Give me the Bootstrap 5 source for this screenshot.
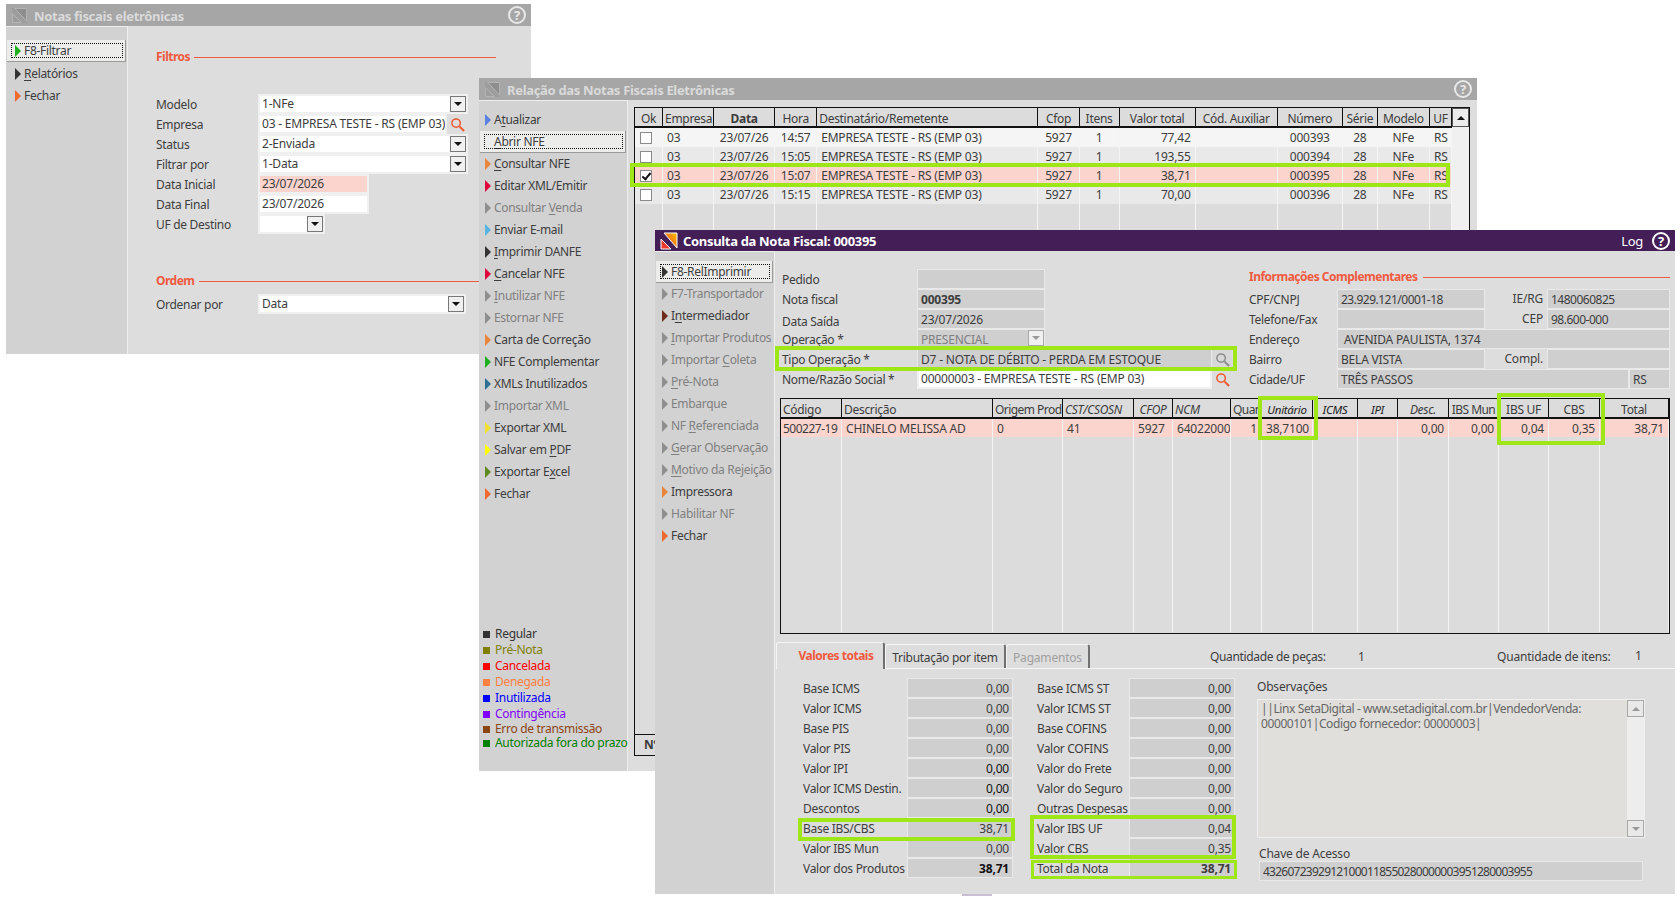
<!DOCTYPE html>
<html lang="pt-BR">

<head>
  <meta charset="UTF-8">
  <meta name="viewport" content="width=device-width, initial-scale=1.0">
  <title>Notas fiscais eletrônicas</title>
  <link href="https://cdn.jsdelivr.net/npm/bootstrap@5.3.2/dist/css/bootstrap.min.css" rel="stylesheet">
  <style>
    body {
      font-family: "Noto Sans", sans-serif;
      font-size: 12px;
      line-height: 18px;
      letter-spacing: -0.2px;
      color: #3d3d3d;
      background-color: white;
      overflow: hidden;
    }

    .stage { width: 1680px; height: 906px; }

    /* the three windows lie on a free canvas */
    .app-win { position: absolute; background: #dddddd; display: flex; flex-direction: column; overflow: hidden; }
    #winFiltro { left: 6px; top: 4px; width: 525px; height: 350px; z-index: 1; }
    #winRelacao { left: 479px; top: 78px; width: 998px; height: 693px; z-index: 2; }
    #winConsulta { left: 655px; top: 230px; width: 1020px; height: 664px; z-index: 3; }
    .win-body { min-height: 0; overflow: hidden; }

    .title-bar {
      height: 22px; flex: none; background: #a6a6a6; color: #dadada; gap: 6px;
      font-size: 13px; font-weight: 700; padding: 0 5px; letter-spacing: -0.32px;
    }
    .title-bar.on { background: #431e57; color: white; height: 21px; gap: 5px; }
    .win-name { padding-top: 2px; }
    .on .win-name { padding-top: 0; }
    .help-ico {
      width: 18px; height: 18px; border: 2px solid #e8e8e8; color: #e8e8e8; border-radius: 50%;
      font-size: 13px; line-height: 14px; text-align: center; font-weight: 700;
    }
    .on .help-ico { border-color: white; color: white; }

    .side-bar {
      flex: none; background: #d2d2d2; border-right: 1px solid #eeeeee; border-top: 1px solid #eeeeee;
      display: flex; flex-direction: column; white-space: nowrap; letter-spacing: -0.3px;
    }
    #winFiltro .side-bar { width: 122px; padding-top: 13px; }
    #winRelacao .side-bar { width: 149px; padding-top: 8px; }
    #winConsulta .side-bar { width: 120px; padding-top: 9px; }

    .side-item { height: 22px; flex: none; display: flex; align-items: center; gap: 3px; color: #3d3d3d; padding-left: 9px; text-decoration: none; }
    #winRelacao .side-item { padding-left: 6px; }
    #winConsulta .side-item { padding-left: 7px; }
    .side-item.off { color: #808080; }
    .side-item u { text-underline-offset: 2px; }
    .side-item.focused {
      background: #ececea; margin: 0 1px; padding-left: 8px; position: relative;
      border-bottom: 1px solid #9a9a9a; border-right: 1px solid #9a9a9a;
    }
    #winFiltro .side-item.focused { margin-bottom: 1px; }
    #winRelacao .side-item.focused { padding-left: 5px; }
    #winConsulta .side-item.focused { padding-left: 6px; }
    .side-item.focused::after {
      content: ""; position: absolute; left: 4px; right: 2px; top: 3px; bottom: 3px; border: 1px dotted #111;
    }
    .tri { width: 0; height: 0; border-left: 6px solid #8f8f8f; border-top: 6px solid transparent; border-bottom: 6px solid transparent; }
    .tri-green { border-left-color: #1eb01e; }
    .tri-dark { border-left-color: #333333; }
    .tri-fire { border-left-color: #f06a30; }
    .tri-blue { border-left-color: #5b7fe0; }
    .tri-orange { border-left-color: #e8853a; }
    .tri-red { border-left-color: #e0003c; }
    .tri-sky { border-left-color: #56b4e0; }
    .tri-teal { border-left-color: #2f6f95; }
    .tri-lemon { border-left-color: #f0e030; }
    .tri-yellow { border-left-color: #ffff00; }
    .tri-olive { border-left-color: #5f8a20; }
    .tri-brown { border-left-color: #6e2a1a; }

    .legend-box { margin-top: auto; padding: 0 0 21px 4px; }
    .legend-row { height: 16px; display: flex; align-items: center; gap: 5px; }
    .legend-row.tight { height: 14px; }
    .legend-row i { width: 7px; height: 7px; flex: none; background: currentColor; }
    .c-regular { color: #333333; }
    .c-pre { color: #808000; }
    .c-cancel { color: #ff0000; }
    .c-deneg { color: #ff8040; }
    .c-inut { color: #0000ff; }
    .c-cont { color: #8000ff; }
    .c-erro { color: #8b4513; }
    .c-auto { color: #008000; }

    .sec-head { color: #f05a40; font-weight: 700; height: 20px; display: flex; align-items: center; gap: 4px; letter-spacing: -0.5px; }
    .sec-head::after { content: ""; flex-grow: 1; height: 1px; background: #f05a40; }

    .form-line { height: 20px; display: flex; align-items: center; }
    .form-line > .lbl { flex: none; white-space: nowrap; padding-top: 2px; letter-spacing: -0.3px; }
    .form-line > .lbl.low { padding-top: 5px; }
    .fld {
      height: 20px; line-height: 20px; background: #cfcfcf; border: 1px solid #e9e9e9; padding: 0 3px;
      white-space: nowrap; overflow: hidden; flex: none;
    }
    .fld.light { background: white; border: 2px solid #f0f0f0; line-height: 16px; padding: 0 2px; position: relative; }
    .fld.pink { background: #fbd5cd; border-color: #f0f0f0; }
    .fld.muted { color: #808080; }
    .num { letter-spacing: -0.5px; }
    .combo-btn {
      position: absolute; right: 0; top: 0; width: 16px; height: 16px; border: 1px solid #777777; background: #f0f0f0;
      display: flex; align-items: center; justify-content: center;
    }
    .combo-btn::before { content: ""; border-top: 4px solid #111; border-left: 4px solid transparent; border-right: 4px solid transparent; }
    .combo-btn.off { border-color: #a8a8a8; }
    .combo-btn.off::before { border-top-color: #999999; }
    .w-111 { width: 111px; }
    .w-67 { width: 67px; }
    .w-189 { width: 189px; }
    .w-210 { width: 210px; }
    .w-208 { width: 208px; }

    #filtroMain { padding: 21px 35px 0 28px; }
    #filtroMain .lbl { width: 102px; }
    #filtroFields { margin-top: 27px; }
    #ordemHead { margin: 37px -35px 3px 0; }

    /* grids */
    .grid-wrap { border: 1px solid #111; background: #dcdcdc; overflow: hidden; }
    .grid-tbl { table-layout: fixed; border-collapse: separate; border-spacing: 0; flex: none; }
    #notasGrid { width: 817px; }
    #itensGrid { width: 888px; }
    .grid-tbl th {
      font-weight: 400; height: 20px; line-height: 15px; border-right: 1px solid #111; border-bottom: 2px solid #111;
      padding: 2px 2px 0; white-space: nowrap; overflow: hidden; text-align: center; letter-spacing: -0.3px;
    }
    .grid-tbl td {
      border-right: 1px solid #f4f4f4; padding: 0 4px; white-space: nowrap; overflow: hidden; line-height: 17px;
    }
    .grid-tbl th.left, .grid-tbl td.left { text-align: left; }
    .grid-tbl td.end { text-align: right; }
    .grid-tbl td.mid { text-align: center; }
    .grid-tbl td.code { padding-left: 2px; letter-spacing: -0.5px; }
    .grid-tbl th.bold { font-weight: 700; }
    .grid-tbl th.ital { font-style: italic; }
    .grid-tbl th.pack { letter-spacing: -0.55px; }
    .grid-tbl th.thin { font-style: italic; font-size: 11.5px; color: #222222; }
    .grid-tbl tr.sel td { background: #fbd5cd; }
    #notasGrid tr.odd td { background: #f5f5f5; }
    #notasGrid tr.even td { background: #e9e9e9; }
    #notasGrid tbody tr { height: 19px; }
    #itensGrid tbody tr { height: 18px; }
    tr.filler td { height: 560px; }
    tr.filler-b td { height: 195px; }
    .chk { display: block; width: 12px; height: 12px; background: white; border: 1px solid #8a8a8a; margin-left: 1px; position: relative; }
    .chk.on::after {
      content: ""; position: absolute; left: 3px; top: 0; width: 5px; height: 9px;
      border: solid #111; border-width: 0 2px 2px 0; transform: rotate(40deg);
    }

    #relacaoMain { padding: 7px 8px 15px 6px; min-height: 0; }
    #notasWrap { flex-grow: 1; display: flex; flex-direction: column; min-height: 0; }
    #notasBody { flex-grow: 1; overflow: hidden; min-height: 0; }
    #notasFoot { height: 21px; flex: none; border-top: 1px solid #111; padding-left: 9px; line-height: 20px; font-weight: 700; }
    .scroll-col { width: 17px; flex: none; background: #f0f0f0; }
    .scroll-up {
      height: 19px; background: #ececec; border: 1px solid #555555; display: flex; align-items: center; justify-content: center;
    }
    .scroll-up::before { content: ""; border-bottom: 4px solid #111; border-left: 4px solid transparent; border-right: 4px solid transparent; }

    /* consulta */
    #consultaMain { padding: 0 5px; }
    #infoLeft { width: 450px; padding: 18px 0 0 2px; }
    #infoLeft .lbl { width: 135px; }
    #infoRight { width: 421px; margin-left: 19px; padding-top: 16px; }
    #infoRight .lbl { width: 88px; }
    #infoRight .sec-head { height: 22px; gap: 6px; padding-bottom: 2px; }
    .w-128 { width: 128px; }
    .w-295 { width: 295px; }
    .w-148 { width: 148px; }
    .w-123 { width: 123px; }
    .w-333 { width: 333px; }
    .w-292 { width: 292px; }
    .w-41 { width: 41px; }
    .side-lbl { width: 62px; text-align: right; padding-right: 4px; flex: none; }
    .search-box { width: 20px; height: 20px; display: flex; align-items: center; justify-content: center; flex: none; }
    .search-box.gray { background: #d8d8d8; color: #8c8c8c; }
    .search-box.hot { color: #f05a30; }
    #itensWrap { height: 236px; margin-top: 9px; }

    #tabStrip { margin: 9px -5px 0 -4px; border-bottom: 1px solid #f4f4f4; height: 26px; }
    #tabStrip .nav-tabs { border: 0; flex-wrap: nowrap; --bs-nav-tabs-border-width: 0; }
    #tabStrip .nav-link {
      padding: 1px 0 0; margin: 0; height: 24px; margin-top: 2px; line-height: 24px; text-align: center; color: #3d3d3d; background: transparent;
      border: 0; border-top: 1px solid #f4f4f4; border-left: 1px solid #f4f4f4; border-right: 2px solid #707070; border-radius: 3px 3px 0 0;
    }
    #tabStrip .nav-link.active {
      width: 109px; height: 27px; margin-top: 0; padding: 0 0 0 12px; color: #f05a40; font-weight: 700; background: #dddddd;
      line-height: 26px; letter-spacing: -0.5px; border-radius: 3px 3px 0 0;
    }
    #tabStrip .nav-link.tab-b { width: 121px; letter-spacing: -0.3px; }
    #tabStrip .nav-link.disabled { width: 84px; color: #a0a0a0; }
    #qtdPecas { margin-left: 120px; width: 148px; padding-top: 2px; letter-spacing: -0.35px; }
    #qtdPecasV { width: 139px; padding-top: 2px; }
    #qtdItens { width: 138px; padding-top: 2px; }

    #totaisBody { padding: 9px 0 0 23px; }
    #totLeft .lbl { width: 104px; }
    #totRight { margin-left: 24px; }
    #totRight .lbl { width: 92px; }
    .tot-col .fld { width: 106px; text-align: right; padding-right: 3px; }
    .txt-strong { color: #111111; }
    #obsCol { margin-left: 22px; width: 388px; }
    #obsHead { padding-bottom: 2px; }
    #obsArea { height: 139px; margin-top: 1px; border: 1px solid #efefef; background: #e0dfdb; color: #666666; display: flex; }
    #obsText { flex-grow: 1; padding: 1px 3px; line-height: 15px; letter-spacing: -0.4px; }
    .obs-scroll { width: 17px; flex: none; background: #ededed; display: flex; flex-direction: column; justify-content: space-between; }
    .obs-btn { height: 17px; background: #e9e9e9; border: 1px solid #a8a8a8; display: flex; align-items: center; justify-content: center; }
    .obs-btn::before { content: ""; border-left: 4px solid transparent; border-right: 4px solid transparent; }
    .obs-btn.up::before { border-bottom: 4px solid #999; }
    .obs-btn.down::before { border-top: 4px solid #999; }
    #chaveLbl { margin: 7px 0 0 2px; height: 18px; }
    #chaveFld { width: 384px; margin-left: 2px; margin-top: -2px; letter-spacing: -0.75px; }

    /* green highlight frames lying over the windows */
    .hl-box { position: absolute; border: 4px solid #9fe617; z-index: 4; pointer-events: none; }
    #hlNota { left: 630px; top: 163px; width: 820px; height: 24px; }
    #hlTipo { left: 775px; top: 346px; width: 462px; height: 25px; }
    #hlUnit { left: 1258px; top: 396px; width: 60px; height: 44px; }
    #hlIbs { left: 1497px; top: 393px; width: 108px; height: 52px; }
    #hlBase { left: 798px; top: 818px; width: 217px; height: 23px; }
    #hlValor { left: 1030px; top: 815px; width: 206px; height: 44px; }
    #hlTotal { left: 1031px; top: 860px; width: 206px; height: 19px; border-width: 3px; }
    #purpleStub { position: absolute; left: 962px; top: 894px; width: 30px; height: 2px; background: #c8bfd2; }
  </style>
</head>

<body>
  <svg width="0" height="0" class="position-absolute">
    <symbol id="logoGray" viewBox="0 0 18 18">
      <path d="M1 1H17V17H1Z" fill="#9c9c9c"/>
      <path d="M4 1.5H16.5V15Z" fill="#8e8e8e" stroke="#b8b8b8"/>
      <path d="M1.5 7V16.5H11Z" fill="#9c9c9c" stroke="#b8b8b8"/>
    </symbol>
    <linearGradient id="logoFire" x1="0" y1="1" x2="1" y2="0">
      <stop offset="0" stop-color="#f03a1e"/>
      <stop offset="1" stop-color="#ffc107"/>
    </linearGradient>
    <symbol id="logoOn" viewBox="0 0 18 18">
      <path d="M4 1H17V16Z" fill="url(#logoFire)" stroke="#fff"/>
      <path d="M1 7V17H11Z" fill="#f03a2e" stroke="#fff"/>
    </symbol>
    <symbol id="lupa" viewBox="0 0 16 16">
      <circle cx="6.5" cy="6.5" r="4.5" fill="none" stroke="currentColor" stroke-width="1.6"/>
      <path d="M10 10L15 15" stroke="currentColor" stroke-width="2.2"/>
    </symbol>
  </svg>

  <div class="stage position-relative">

    <!-- filtro -->
    <section class="app-win" id="winFiltro">
      <div class="title-bar d-flex align-items-center">
        <svg width="17" height="17"><use href="#logoGray"/></svg>
        <span class="flex-grow-1 win-name">Notas fiscais eletrônicas</span>
        <span class="help-ico">?</span>
      </div>
      <div class="d-flex flex-grow-1 win-body">
        <nav class="side-bar">
          <a class="side-item focused"><span class="tri tri-green"></span><span>F8-Filtrar</span></a>
          <a class="side-item"><span class="tri tri-dark"></span><span><u>R</u>elatórios</span></a>
          <a class="side-item"><span class="tri tri-fire"></span><span>Fechar</span></a>
        </nav>
        <div class="flex-grow-1" id="filtroMain">
          <div class="sec-head">Filtros</div>
          <div id="filtroFields">
            <div class="form-line"><span class="lbl">Modelo</span><div class="fld light w-210">1-NFe<span class="combo-btn"></span></div></div>
            <div class="form-line"><span class="lbl">Empresa</span><div class="fld light w-189">03 - EMPRESA TESTE - RS (EMP 03)</div><span class="search-box hot"><svg width="15" height="15"><use href="#lupa"/></svg></span></div>
            <div class="form-line"><span class="lbl">Status</span><div class="fld light w-210">2-Enviada<span class="combo-btn"></span></div></div>
            <div class="form-line"><span class="lbl">Filtrar por</span><div class="fld light w-210">1-Data<span class="combo-btn"></span></div></div>
            <div class="form-line"><span class="lbl">Data Inicial</span><div class="fld light pink w-111">23/07/2026</div></div>
            <div class="form-line"><span class="lbl">Data Final</span><div class="fld light w-111">23/07/2026</div></div>
            <div class="form-line"><span class="lbl">UF de Destino</span><div class="fld light w-67"><span class="combo-btn"></span></div></div>
          </div>
          <div class="sec-head" id="ordemHead">Ordem</div>
          <div class="form-line"><span class="lbl">Ordenar por</span><div class="fld light w-208">Data<span class="combo-btn"></span></div></div>
        </div>
      </div>
    </section>

    <!-- relacao -->
    <section class="app-win" id="winRelacao">
      <div class="title-bar d-flex align-items-center">
        <svg width="17" height="17"><use href="#logoGray"/></svg>
        <span class="flex-grow-1 win-name">Relação das Notas Fiscais Eletrônicas</span>
        <span class="help-ico">?</span>
      </div>
      <div class="d-flex flex-grow-1 win-body">
        <nav class="side-bar">
          <a class="side-item"><span class="tri tri-blue"></span><span>A<u>t</u>ualizar</span></a>
          <a class="side-item focused"><span class="tri tri-dark invisible"></span><span><u>A</u>brir NFE</span></a>
          <a class="side-item"><span class="tri tri-orange"></span><span><u>C</u>onsultar NFE</span></a>
          <a class="side-item"><span class="tri tri-red"></span><span>Editar XML/Emitir</span></a>
          <a class="side-item off"><span class="tri"></span><span>Consultar <u>V</u>enda</span></a>
          <a class="side-item"><span class="tri tri-sky"></span><span>Enviar E-mail</span></a>
          <a class="side-item"><span class="tri tri-dark"></span><span><u>I</u>mprimir DANFE</span></a>
          <a class="side-item"><span class="tri tri-red"></span><span><u>C</u>ancelar NFE</span></a>
          <a class="side-item off"><span class="tri"></span><span><u>I</u>nutilizar NFE</span></a>
          <a class="side-item off"><span class="tri"></span><span>Estornar NFE</span></a>
          <a class="side-item"><span class="tri tri-orange"></span><span>Carta de Correção</span></a>
          <a class="side-item"><span class="tri tri-green"></span><span>NFE Complementar</span></a>
          <a class="side-item"><span class="tri tri-teal"></span><span>XMLs Inutilizados</span></a>
          <a class="side-item off"><span class="tri"></span><span>Importar XML</span></a>
          <a class="side-item"><span class="tri tri-lemon"></span><span>Exportar XML</span></a>
          <a class="side-item"><span class="tri tri-yellow"></span><span>Salvar em <u>P</u>DF</span></a>
          <a class="side-item"><span class="tri tri-olive"></span><span>Exportar E<u>x</u>cel</span></a>
          <a class="side-item"><span class="tri tri-fire"></span><span>Fechar</span></a>
          <div class="legend-box">
            <div class="legend-row c-regular"><i></i><span>Regular</span></div>
            <div class="legend-row c-pre"><i></i><span>Pré-Nota</span></div>
            <div class="legend-row c-cancel"><i></i><span>Cancelada</span></div>
            <div class="legend-row c-deneg"><i></i><span>Denegada</span></div>
            <div class="legend-row c-inut"><i></i><span>Inutilizada</span></div>
            <div class="legend-row c-cont"><i></i><span>Contingência</span></div>
            <div class="legend-row tight c-erro"><i></i><span>Erro de transmissão</span></div>
            <div class="legend-row tight c-auto"><i></i><span>Autorizada fora do prazo</span></div>
          </div>
        </nav>
        <div class="flex-grow-1 d-flex" id="relacaoMain">
          <div class="grid-wrap flex-grow-1" id="notasWrap">
            <div class="d-flex" id="notasBody">
              <table class="grid-tbl" id="notasGrid">
                <colgroup>
                  <col style="width:28px"><col style="width:51px"><col style="width:61px"><col style="width:42px"><col style="width:221px"><col style="width:41px"><col style="width:40px"><col style="width:76px"><col style="width:82px"><col style="width:65px"><col style="width:35px"><col style="width:52px"><col style="width:22px">
                </colgroup>
                <thead>
                  <tr>
                    <th>Ok</th><th>Empresa</th><th class="bold">Data</th><th>Hora</th><th class="left">Destinatário/Remetente</th><th>Cfop</th><th>Itens</th><th>Valor total</th><th>Cód. Auxiliar</th><th>Número</th><th>Série</th><th>Modelo</th><th>UF</th>
                  </tr>
                </thead>
                <tbody>
                  <tr class="odd"><td><span class="chk"></span></td><td>03</td><td class="mid">23/07/26</td><td class="mid">14:57</td><td>EMPRESA TESTE - RS (EMP 03)</td><td class="mid">5927</td><td class="mid">1</td><td class="end">77,42</td><td></td><td class="mid">000393</td><td class="mid">28</td><td class="mid">NFe</td><td class="mid">RS</td></tr>
                  <tr class="even"><td><span class="chk"></span></td><td>03</td><td class="mid">23/07/26</td><td class="mid">15:05</td><td>EMPRESA TESTE - RS (EMP 03)</td><td class="mid">5927</td><td class="mid">1</td><td class="end">193,55</td><td></td><td class="mid">000394</td><td class="mid">28</td><td class="mid">NFe</td><td class="mid">RS</td></tr>
                  <tr class="sel"><td><span class="chk on"></span></td><td>03</td><td class="mid">23/07/26</td><td class="mid">15:07</td><td>EMPRESA TESTE - RS (EMP 03)</td><td class="mid">5927</td><td class="mid">1</td><td class="end">38,71</td><td></td><td class="mid">000395</td><td class="mid">28</td><td class="mid">NFe</td><td class="mid">RS</td></tr>
                  <tr class="even"><td><span class="chk"></span></td><td>03</td><td class="mid">23/07/26</td><td class="mid">15:15</td><td>EMPRESA TESTE - RS (EMP 03)</td><td class="mid">5927</td><td class="mid">1</td><td class="end">70,00</td><td></td><td class="mid">000396</td><td class="mid">28</td><td class="mid">NFe</td><td class="mid">RS</td></tr>
                  <tr class="filler"><td></td><td></td><td></td><td></td><td></td><td></td><td></td><td></td><td></td><td></td><td></td><td></td><td></td></tr>
                </tbody>
              </table>
              <div class="scroll-col"><div class="scroll-up"></div></div>
            </div>
            <div id="notasFoot">Nº</div>
          </div>
        </div>
      </div>
    </section>

    <!-- consulta -->
    <section class="app-win" id="winConsulta">
      <div class="title-bar on d-flex align-items-center">
        <svg width="18" height="18"><use href="#logoOn"/></svg>
        <span class="flex-grow-1 win-name">Consulta da Nota Fiscal: 000395</span>
        <span class="fw-normal me-1">Log</span>
        <span class="help-ico">?</span>
      </div>
      <div class="d-flex flex-grow-1 win-body">
        <nav class="side-bar">
          <a class="side-item focused"><span class="tri tri-dark"></span><span>F8-RelImprimir</span></a>
          <a class="side-item off"><span class="tri"></span><span>F7-Transportador</span></a>
          <a class="side-item"><span class="tri tri-brown"></span><span>I<u>n</u>termediador</span></a>
          <a class="side-item off"><span class="tri"></span><span><u>I</u>mportar Produtos</span></a>
          <a class="side-item off"><span class="tri"></span><span>Importar <u>C</u>oleta</span></a>
          <a class="side-item off"><span class="tri"></span><span><u>P</u>ré-Nota</span></a>
          <a class="side-item off"><span class="tri"></span><span>Embarque</span></a>
          <a class="side-item off"><span class="tri"></span><span>NF <u>R</u>eferenciada</span></a>
          <a class="side-item off"><span class="tri"></span><span><u>G</u>erar Observação</span></a>
          <a class="side-item off"><span class="tri"></span><span><u>M</u>otivo da Rejeição</span></a>
          <a class="side-item"><span class="tri tri-orange"></span><span>Impressora</span></a>
          <a class="side-item off"><span class="tri"></span><span>Habilitar NF</span></a>
          <a class="side-item"><span class="tri tri-fire"></span><span>Fechar</span></a>
        </nav>
        <div class="flex-grow-1" id="consultaMain">
          <div class="d-flex">
            <div id="infoLeft">
              <div class="form-line"><span class="lbl">Pedido</span><div class="fld w-128"></div></div>
              <div class="form-line"><span class="lbl">Nota fiscal</span><div class="fld w-128 fw-bold">000395</div></div>
              <div class="form-line"><span class="lbl low">Data Saída</span><div class="fld w-128">23/07/2026</div></div>
              <div class="form-line"><span class="lbl">Operação *</span><div class="fld w-128 muted position-relative">PRESENCIAL<span class="combo-btn off"></span></div></div>
              <div class="form-line"><span class="lbl">Tipo Operação *</span><div class="fld w-295">D7 - NOTA DE DÉBITO - PERDA EM ESTOQUE</div><span class="search-box gray"><svg width="15" height="15"><use href="#lupa"/></svg></span></div>
              <div class="form-line"><span class="lbl">Nome/Razão Social *</span><div class="fld light w-295">00000003 - EMPRESA TESTE - RS (EMP 03)</div><span class="search-box hot"><svg width="15" height="15"><use href="#lupa"/></svg></span></div>
            </div>
            <div id="infoRight">
              <div class="sec-head">Informações Complementares</div>
              <div class="form-line"><span class="lbl">CPF/CNPJ</span><div class="fld w-148 num">23.929.121/0001-18</div><span class="side-lbl">IE/RG</span><div class="fld w-123 num">1480060825</div></div>
              <div class="form-line"><span class="lbl">Telefone/Fax</span><div class="fld w-148"></div><span class="side-lbl">CEP</span><div class="fld w-123 num">98.600-000</div></div>
              <div class="form-line"><span class="lbl">Endereço</span><div class="fld w-333">&nbsp;AVENIDA PAULISTA, 1374</div></div>
              <div class="form-line"><span class="lbl">Bairro</span><div class="fld w-148">BELA VISTA</div><span class="side-lbl">Compl.</span><div class="fld w-123"></div></div>
              <div class="form-line"><span class="lbl">Cidade/UF</span><div class="fld w-292">TRÊS PASSOS</div><div class="fld w-41">RS</div></div>
            </div>
          </div>

          <div class="grid-wrap" id="itensWrap">
            <table class="grid-tbl" id="itensGrid">
              <colgroup>
                <col style="width:61px"><col style="width:151px"><col style="width:70px"><col style="width:71px"><col style="width:39px"><col style="width:58px"><col style="width:31px"><col style="width:51px"><col style="width:45px"><col style="width:40px"><col style="width:51px"><col style="width:50px"><col style="width:50px"><col style="width:51px"><col style="width:69px">
              </colgroup>
              <thead>
                <tr>
                  <th class="left">Código</th><th class="left">Descrição</th><th class="left pack">Origem Prod</th><th class="left ital">CST/CSOSN</th><th class="ital">CFOP</th><th class="left ital">NCM</th><th class="left pack">Quan</th><th class="thin">Unitário</th><th class="thin">ICMS</th><th class="thin">IPI</th><th class="ital">Desc.</th><th class="pack">IBS Mun</th><th>IBS UF</th><th>CBS</th><th>Total</th>
                </tr>
              </thead>
              <tbody>
                <tr class="sel"><td class="code">500227-19</td><td>CHINELO MELISSA AD</td><td>0</td><td>41</td><td>5927</td><td>64022000</td><td class="end">1</td><td class="end">38,7100</td><td></td><td></td><td class="end">0,00</td><td class="end">0,00</td><td class="end">0,04</td><td class="end">0,35</td><td class="end">38,71</td></tr>
                <tr class="filler-b"><td></td><td></td><td></td><td></td><td></td><td></td><td></td><td></td><td></td><td></td><td></td><td></td><td></td><td></td><td></td></tr>
              </tbody>
            </table>
          </div>

          <div class="d-flex align-items-center" id="tabStrip">
            <ul class="nav nav-tabs">
              <li class="nav-item"><a class="nav-link active">Valores totais</a></li>
              <li class="nav-item"><a class="nav-link tab-b">Tributação por item</a></li>
              <li class="nav-item"><a class="nav-link disabled">Pagamentos</a></li>
            </ul>
            <span id="qtdPecas">Quantidade de peças:</span><span id="qtdPecasV">1</span>
            <span id="qtdItens">Quantidade de itens:</span><span>1</span>
          </div>

          <div class="d-flex" id="totaisBody">
            <div class="tot-col" id="totLeft">
              <div class="form-line"><span class="lbl">Base ICMS</span><div class="fld">0,00</div></div>
              <div class="form-line"><span class="lbl">Valor ICMS</span><div class="fld">0,00</div></div>
              <div class="form-line"><span class="lbl">Base PIS</span><div class="fld">0,00</div></div>
              <div class="form-line"><span class="lbl">Valor PIS</span><div class="fld">0,00</div></div>
              <div class="form-line"><span class="lbl">Valor IPI</span><div class="fld txt-strong">0,00</div></div>
              <div class="form-line"><span class="lbl">Valor ICMS Destin.</span><div class="fld txt-strong">0,00</div></div>
              <div class="form-line"><span class="lbl">Descontos</span><div class="fld txt-strong">0,00</div></div>
              <div class="form-line"><span class="lbl">Base IBS/CBS</span><div class="fld">38,71</div></div>
              <div class="form-line"><span class="lbl">Valor IBS Mun</span><div class="fld">0,00</div></div>
              <div class="form-line"><span class="lbl">Valor dos Produtos</span><div class="fld fw-bold txt-strong">38,71</div></div>
            </div>
            <div class="tot-col" id="totRight">
              <div class="form-line"><span class="lbl">Base ICMS ST</span><div class="fld">0,00</div></div>
              <div class="form-line"><span class="lbl">Valor ICMS ST</span><div class="fld">0,00</div></div>
              <div class="form-line"><span class="lbl">Base COFINS</span><div class="fld">0,00</div></div>
              <div class="form-line"><span class="lbl">Valor COFINS</span><div class="fld">0,00</div></div>
              <div class="form-line"><span class="lbl">Valor do Frete</span><div class="fld">0,00</div></div>
              <div class="form-line"><span class="lbl">Valor do Seguro</span><div class="fld">0,00</div></div>
              <div class="form-line"><span class="lbl">Outras Despesas</span><div class="fld">0,00</div></div>
              <div class="form-line"><span class="lbl">Valor IBS UF</span><div class="fld">0,04</div></div>
              <div class="form-line"><span class="lbl">Valor CBS</span><div class="fld">0,35</div></div>
              <div class="form-line"><span class="lbl">Total da Nota</span><div class="fld fw-bold">38,71</div></div>
            </div>
            <div id="obsCol">
              <div class="form-line" id="obsHead">Observações</div>
              <div id="obsArea">
                <div id="obsText">||Linx SetaDigital - www.setadigital.com.br|VendedorVenda:<br>00000101|Codigo fornecedor: 00000003|</div>
                <div class="obs-scroll"><div class="obs-btn up"></div><div class="obs-btn down"></div></div>
              </div>
              <div id="chaveLbl">Chave de Acesso</div>
              <div class="fld" id="chaveFld">43260723929121000118550280000003951280003955</div>
            </div>
          </div>
        </div>
      </div>
    </section>

    <span class="hl-box" id="hlNota"></span>
    <span class="hl-box" id="hlTipo"></span>
    <span class="hl-box" id="hlUnit"></span>
    <span class="hl-box" id="hlIbs"></span>
    <span class="hl-box" id="hlBase"></span>
    <span class="hl-box" id="hlValor"></span>
    <span class="hl-box" id="hlTotal"></span>
    <span id="purpleStub"></span>
  </div>

  <script src="https://cdn.jsdelivr.net/npm/bootstrap@5.3.2/dist/js/bootstrap.bundle.min.js"></script>
</body>

</html>
